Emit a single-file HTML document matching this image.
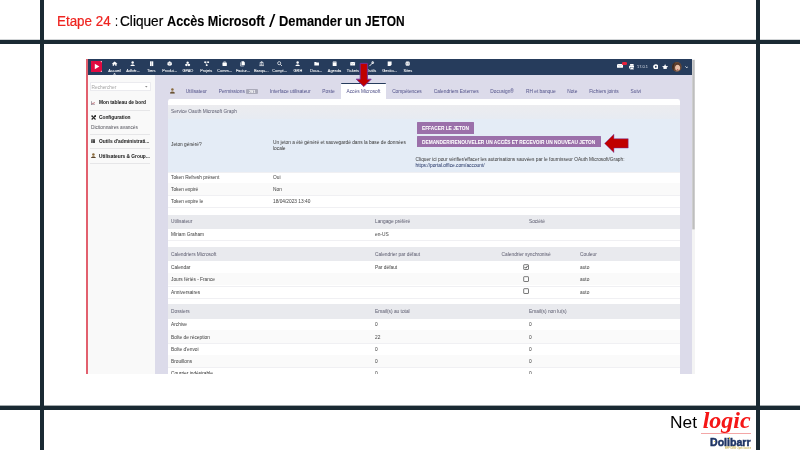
<!DOCTYPE html>
<html lang="fr"><head><meta charset="utf-8"><title>Etape 24</title>
<style>
html,body{margin:0;padding:0;background:#fff;}
body{width:800px;height:450px;overflow:hidden;position:relative;font-family:"Liberation Sans",sans-serif;}
#s{will-change:transform;position:absolute;left:0;top:0;width:800px;height:450px;overflow:hidden;background:#fff;}
#s div,#s span,#s svg{position:absolute;}
#shot{left:0;top:0;width:800px;height:450px;filter:blur(0.45px);}
#shot .t{-webkit-text-stroke:0.03px currentColor;}
.t{white-space:pre;font-family:"Liberation Sans",sans-serif;}
.h{white-space:pre;font-family:"Liberation Sans",sans-serif;transform-origin:0 50%;}
</style></head><body><div id="s">

<div style="left:0px;top:39.8px;width:800px;height:4.2px;background:#1a2a33;"></div>
<div style="left:0px;top:405.7px;width:800px;height:4.3px;background:#1a2a33;"></div>
<div style="left:0px;top:405px;width:800px;height:1px;background:rgba(26,42,51,0.4);"></div>
<div style="left:0px;top:39px;width:800px;height:1px;background:rgba(26,42,51,0.2);"></div>
<div style="left:40px;top:0px;width:4.1px;height:450px;background:#1a2a33;"></div>
<div style="left:755.9px;top:0px;width:4.1px;height:450px;background:#1a2a33;"></div>
<span class="h" style="transform:scaleX(0.9561);left:56.5px;top:10.6px;line-height:20px;font-size:14px;color:#ee2420;font-weight:normal;-webkit-text-stroke:0.22px #ee2420;">Etape 24</span>
<span class="h" style="transform:scaleX(0.7711);left:114.6px;top:10.6px;line-height:20px;font-size:14px;color:#000;font-weight:normal;-webkit-text-stroke:0.22px #000;">:</span>
<span class="h" style="transform:scaleX(0.9739);left:120px;top:10.6px;line-height:20px;font-size:14px;color:#000;font-weight:normal;-webkit-text-stroke:0.22px #000;">Cliquer</span>
<span class="h" style="transform:scaleX(0.9042);left:166.9px;top:10.6px;line-height:20px;font-size:14px;color:#000;font-weight:bold;-webkit-text-stroke:0.12px #000;">Accès Microsoft</span>
<span class="h" style="transform:scaleX(1.3086);left:268.6px;top:11.1px;line-height:20px;font-size:17.6px;color:#000;font-weight:normal;-webkit-text-stroke:0px #000;">/</span>
<span class="h" style="transform:scaleX(0.9201);left:278.6px;top:10.6px;line-height:20px;font-size:14px;color:#000;font-weight:bold;-webkit-text-stroke:0.12px #000;">Demander</span>
<span class="h" style="transform:scaleX(0.9702);left:345.4px;top:10.6px;line-height:20px;font-size:14px;color:#000;font-weight:bold;-webkit-text-stroke:0.12px #000;">un</span>
<span class="h" style="transform:scaleX(0.8528);left:364.6px;top:10.6px;line-height:20px;font-size:14px;color:#000;font-weight:bold;-webkit-text-stroke:0.12px #000;">JETON</span>
<div id="shot">
<div style="left:86px;top:59px;width:606px;height:314.7px;background:#dcdbea;"></div>
<div style="left:692px;top:59px;width:3px;height:314.7px;background:#f4f4f4;"></div>
<svg style="left:690px;top:59px" width="8" height="172" viewBox="690 59 8 172"><rect x="692.3" y="60" width="2.4" height="169.4" fill="#bebebe"/></svg>
<div style="left:88px;top:74.6px;width:66.8px;height:299.1px;background:#f9f9f9;"></div>
<div style="left:85.7px;top:59px;width:2.4px;height:314.7px;background:#e2606e;"></div>
<div style="left:88px;top:59px;width:604px;height:15.6px;background:#263c5c;"></div>
<div style="left:90.9px;top:60.9px;width:11.1px;height:11px;background:#fff;"></div>
<div style="left:90.9px;top:60.9px;width:11.1px;height:11px;background:#e00a40;border-radius:0.3px 2px 2px 0.3px;"></div>
<svg style="left:90.9px;top:60.9px" width="11.1" height="11" viewBox="0 0 11.1 11"><path d="M3.8 2.8 L8.4 5.5 L3.8 8.2 Z" fill="#fff"/></svg>
<svg style="left:111.95px;top:61.05px;overflow:visible" width="5.3" height="5.3" viewBox="0 0 4.6 4.6"><path d="M-0.2 2.4 L2.3 0.4 L4.8 2.4 L4 2.4 L4 4.2 L2.8 4.2 L2.8 3 L1.8 3 L1.8 4.2 L0.6 4.2 L0.6 2.4 Z" fill="#fff"/></svg>
<span class="t" style="left:114.6px;top:66.70px;line-height:8px;font-size:3.9px;color:#fff;font-weight:normal;transform:translateX(-50%);-webkit-text-stroke:0.05px #fff;">Accueil</span>
<svg style="left:130.28px;top:61.05px;overflow:visible" width="5.3" height="5.3" viewBox="0 0 4.6 4.6"><circle cx="2.3" cy="1.3" r="1.05" fill="#fff"/><path d="M0.4 4.4 C0.4 2.6 4.2 2.6 4.2 4.4 Z" fill="#fff"/></svg>
<span class="t" style="left:132.93px;top:66.70px;line-height:8px;font-size:3.9px;color:#fff;font-weight:normal;transform:translateX(-50%);-webkit-text-stroke:0.05px #fff;">Adhér...</span>
<svg style="left:148.61px;top:61.05px;overflow:visible" width="5.3" height="5.3" viewBox="0 0 4.6 4.6"><rect x="0.9" y="0.3" width="2.8" height="4.1" fill="#fff"/><rect x="2.1" y="0.3" width="0.4" height="4.1" fill="#263c5c" opacity="0.6"/></svg>
<span class="t" style="left:151.26px;top:66.70px;line-height:8px;font-size:3.9px;color:#fff;font-weight:normal;transform:translateX(-50%);-webkit-text-stroke:0.05px #fff;">Tiers</span>
<svg style="left:166.94px;top:61.05px;overflow:visible" width="5.3" height="5.3" viewBox="0 0 4.6 4.6"><path d="M2.3 0.3 L4.2 1.2 L4.2 3.4 L2.3 4.4 L0.4 3.4 L0.4 1.2 Z" fill="#fff"/><path d="M2.3 2.2 L2.3 4.4 M0.4 1.2 L2.3 2.2 L4.2 1.2" stroke="#263c5c" stroke-width="0.35" fill="none" opacity="0.7"/></svg>
<span class="t" style="left:169.58999999999997px;top:66.70px;line-height:8px;font-size:3.9px;color:#fff;font-weight:normal;transform:translateX(-50%);-webkit-text-stroke:0.05px #fff;">Produi...</span>
<svg style="left:185.27px;top:61.05px;overflow:visible" width="5.3" height="5.3" viewBox="0 0 4.6 4.6"><path d="M2.3 0.4 L3.3 0.9 L3.3 2 L2.3 2.5 L1.3 2 L1.3 0.9 Z M1.2 2.4 L2.2 2.9 L2.2 4 L1.2 4.5 L0.2 4 L0.2 2.9 Z M3.4 2.4 L4.4 2.9 L4.4 4 L3.4 4.5 L2.4 4 L2.4 2.9 Z" fill="#fff"/></svg>
<span class="t" style="left:187.92px;top:66.70px;line-height:8px;font-size:3.9px;color:#fff;font-weight:normal;transform:translateX(-50%);-webkit-text-stroke:0.05px #fff;">GPAO</span>
<svg style="left:203.60px;top:61.05px;overflow:visible" width="5.3" height="5.3" viewBox="0 0 4.6 4.6"><rect x="0.2" y="0.4" width="1.5" height="1.3" fill="#fff"/><rect x="2.9" y="0.4" width="1.5" height="1.3" fill="#fff"/><rect x="1.6" y="3" width="1.5" height="1.3" fill="#fff"/><path d="M1 1 L3.6 1 M1.2 1.2 L2.3 3.4" stroke="#fff" stroke-width="0.45" fill="none"/></svg>
<span class="t" style="left:206.25px;top:66.70px;line-height:8px;font-size:3.9px;color:#fff;font-weight:normal;transform:translateX(-50%);-webkit-text-stroke:0.05px #fff;">Projets</span>
<svg style="left:221.93px;top:61.05px;overflow:visible" width="5.3" height="5.3" viewBox="0 0 4.6 4.6"><rect x="0.4" y="1.4" width="3.8" height="2.9" rx="0.3" fill="#fff"/><path d="M1.5 1.4 L1.5 0.7 L3.1 0.7 L3.1 1.4" stroke="#fff" stroke-width="0.5" fill="none"/></svg>
<span class="t" style="left:224.57999999999998px;top:66.70px;line-height:8px;font-size:3.9px;color:#fff;font-weight:normal;transform:translateX(-50%);-webkit-text-stroke:0.05px #fff;">Comm...</span>
<svg style="left:240.26px;top:61.05px;overflow:visible" width="5.3" height="5.3" viewBox="0 0 4.6 4.6"><path d="M1.3 0.3 L3.3 0.3 L4.2 1.2 L4.2 3.6 L1.3 3.6 Z" fill="#fff"/><path d="M0.5 1.2 L0.5 4.4 L3.3 4.4" stroke="#fff" stroke-width="0.5" fill="none"/></svg>
<span class="t" style="left:242.91px;top:66.70px;line-height:8px;font-size:3.9px;color:#fff;font-weight:normal;transform:translateX(-50%);-webkit-text-stroke:0.05px #fff;">Factur...</span>
<svg style="left:258.59px;top:61.05px;overflow:visible" width="5.3" height="5.3" viewBox="0 0 4.6 4.6"><path d="M0.3 1.6 L2.3 0.3 L4.3 1.6 Z" fill="#fff"/><rect x="0.3" y="3.8" width="4" height="0.6" fill="#fff"/><path d="M1 1.9 L1 3.6 M2.3 1.9 L2.3 3.6 M3.6 1.9 L3.6 3.6" stroke="#fff" stroke-width="0.6"/></svg>
<span class="t" style="left:261.24px;top:66.70px;line-height:8px;font-size:3.9px;color:#fff;font-weight:normal;transform:translateX(-50%);-webkit-text-stroke:0.05px #fff;">Banqu...</span>
<svg style="left:276.92px;top:61.05px;overflow:visible" width="5.3" height="5.3" viewBox="0 0 4.6 4.6"><circle cx="1.9" cy="1.9" r="1.35" stroke="#fff" stroke-width="0.6" fill="none"/><path d="M2.9 2.9 L4.3 4.3" stroke="#fff" stroke-width="0.7"/></svg>
<span class="t" style="left:279.56999999999994px;top:66.70px;line-height:8px;font-size:3.9px;color:#fff;font-weight:normal;transform:translateX(-50%);-webkit-text-stroke:0.05px #fff;">Compt...</span>
<svg style="left:295.25px;top:61.05px;overflow:visible" width="5.3" height="5.3" viewBox="0 0 4.6 4.6"><circle cx="2.3" cy="1.3" r="1.05" fill="#fff"/><path d="M0.4 4.4 C0.4 2.6 4.2 2.6 4.2 4.4 Z" fill="#fff"/></svg>
<span class="t" style="left:297.9px;top:66.70px;line-height:8px;font-size:3.9px;color:#fff;font-weight:normal;transform:translateX(-50%);-webkit-text-stroke:0.05px #fff;">GRH</span>
<svg style="left:313.58px;top:61.05px;overflow:visible" width="5.3" height="5.3" viewBox="0 0 4.6 4.6"><path d="M0.3 0.9 L1.8 0.9 L2.3 1.4 L4.3 1.4 L4.3 3.9 L0.3 3.9 Z" fill="#fff"/></svg>
<span class="t" style="left:316.23px;top:66.70px;line-height:8px;font-size:3.9px;color:#fff;font-weight:normal;transform:translateX(-50%);-webkit-text-stroke:0.05px #fff;">Docu...</span>
<svg style="left:331.91px;top:61.05px;overflow:visible" width="5.3" height="5.3" viewBox="0 0 4.6 4.6"><rect x="0.6" y="0.5" width="3.4" height="3.9" rx="0.3" fill="#fff"/><rect x="0.6" y="1.3" width="3.4" height="0.35" fill="#263c5c" opacity="0.6"/></svg>
<span class="t" style="left:334.55999999999995px;top:66.70px;line-height:8px;font-size:3.9px;color:#fff;font-weight:normal;transform:translateX(-50%);-webkit-text-stroke:0.05px #fff;">Agenda</span>
<svg style="left:350.24px;top:61.05px;overflow:visible" width="5.3" height="5.3" viewBox="0 0 4.6 4.6"><rect x="0.2" y="0.9" width="4.2" height="3" rx="0.3" fill="#fff"/><path d="M0.2 1.1 L2.3 2.7 L4.4 1.1" stroke="#263c5c" stroke-width="0.3" fill="none" opacity="0.6"/></svg>
<span class="t" style="left:352.89px;top:66.70px;line-height:8px;font-size:3.9px;color:#fff;font-weight:normal;transform:translateX(-50%);-webkit-text-stroke:0.05px #fff;">Tickets</span>
<svg style="left:368.57px;top:61.05px;overflow:visible" width="5.3" height="5.3" viewBox="0 0 4.6 4.6"><path d="M0.6 4.2 L2.8 2" stroke="#fff" stroke-width="0.8" stroke-linecap="round"/><circle cx="3.3" cy="1.4" r="1.1" fill="#fff"/><path d="M3.3 1.4 L4.6 0.1" stroke="#263c5c" stroke-width="0.7"/></svg>
<span class="t" style="left:371.22px;top:66.70px;line-height:8px;font-size:3.9px;color:#fff;font-weight:normal;transform:translateX(-50%);-webkit-text-stroke:0.05px #fff;">Outils</span>
<svg style="left:386.90px;top:61.05px;overflow:visible" width="5.3" height="5.3" viewBox="0 0 4.6 4.6"><path d="M0.6 0.5 L4 0.5 L4 3.2 L2.9 4.3 L0.6 4.3 Z" fill="#fff"/></svg>
<span class="t" style="left:389.54999999999995px;top:66.70px;line-height:8px;font-size:3.9px;color:#fff;font-weight:normal;transform:translateX(-50%);-webkit-text-stroke:0.05px #fff;">Gestio...</span>
<svg style="left:405.23px;top:61.05px;overflow:visible" width="5.3" height="5.3" viewBox="0 0 4.6 4.6"><circle cx="2.3" cy="2.3" r="2" fill="#fff"/><path d="M0.3 2.3 L4.3 2.3 M2.3 0.3 C1.2 1.4 1.2 3.2 2.3 4.3 C3.4 3.2 3.4 1.4 2.3 0.3" stroke="#263c5c" stroke-width="0.3" fill="none" opacity="0.6"/></svg>
<span class="t" style="left:407.88px;top:66.70px;line-height:8px;font-size:3.9px;color:#fff;font-weight:normal;transform:translateX(-50%);-webkit-text-stroke:0.05px #fff;">Sites</span>
<svg style="left:113.0px;top:73.2px" width="3.2" height="1.6" viewBox="0 0 3.2 1.6"><path d="M0 1.6 L1.6 0 L3.2 1.6 Z" fill="#fff"/></svg>
<svg style="left:617.4px;top:64.2px" width="6" height="3.8" viewBox="0 0 6 3.8"><rect x="0" y="0" width="6" height="3.8" rx="0.5" fill="#fff"/><path d="M0.3 0.5 L3 2.2 L5.7 0.5" stroke="#263c5c" stroke-width="0.4" fill="none" opacity="0.55"/></svg>
<div style="left:622.3px;top:62.4px;width:4.4px;height:2.7px;background:#e8203a;border-radius:1.35px;"></div>
<svg style="left:628.6px;top:63.8px" width="5.7" height="5.8" viewBox="0 0 5.7 5.8"><rect x="1.1" y="0" width="3.5" height="1.8" fill="#fff"/><rect x="0" y="1.7" width="5.7" height="2.9" rx="0.5" fill="#fff"/><rect x="1.1" y="3.5" width="3.5" height="2.2" fill="#fff" stroke="#263c5c" stroke-width="0.4"/></svg>
<span class="t" style="left:642.4px;top:62.70px;line-height:8px;font-size:3.9px;color:#c9d0dc;font-weight:normal;transform:translateX(-50%);">17.0.1</span>
<svg style="left:652.5px;top:63.7px" width="5.6" height="5.6" viewBox="0 0 5.4 5.4"><circle cx="2.7" cy="2.7" r="2.5" fill="#fff"/><circle cx="2.7" cy="2.7" r="0.9" fill="#263c5c"/></svg>
<svg style="left:662.1px;top:63.6px" width="6.2" height="5.9" viewBox="0 0 5.4 5.2"><path d="M2.7 0 L3.5 1.8 L5.4 2 L4 3.3 L4.4 5.2 L2.7 4.2 L1 5.2 L1.4 3.3 L0 2 L1.9 1.8 Z" fill="#fff"/></svg>
<svg style="left:672.3px;top:61.9px" width="9.8" height="9.8" viewBox="0 0 8.2 8.2"><defs><clipPath id="av"><circle cx="4.1" cy="4.1" r="4.1"/></clipPath></defs><g clip-path="url(#av)"><rect width="8.2" height="8.2" fill="#6b4a36"/><path d="M0 0 L3 0 C1.6 1.6 1.2 5 1.6 8.2 L0 8.2 Z" fill="#3d2a20"/><ellipse cx="4.7" cy="4.5" rx="2.1" ry="2.7" fill="#e6bda6"/><path d="M2.2 4.6 C1.8 1.6 3.4 0.5 4.8 0.7 C6.8 0.7 7.7 2.6 7.1 5 C6.8 3.3 6 2.4 4.7 2.3 C3.4 2.4 2.7 3.3 2.2 4.6 Z" fill="#5a3c2c"/><ellipse cx="4.7" cy="6.2" rx="0.8" ry="0.4" fill="#b8474a"/><rect x="2" y="7.5" width="6.2" height="0.8" fill="#8a6a5a"/></g></svg>
<svg style="left:684.6px;top:65.7px" width="3.6" height="2.4" viewBox="0 0 3.4 2.2"><path d="M0.3 0.3 L1.7 1.7 L3.1 0.3" stroke="#fff" stroke-width="0.75" fill="none"/></svg>
<div style="left:89.5px;top:82.3px;width:61px;height:9.1px;background:#fff;border:0.4px solid #ebebef;box-sizing:border-box;border-radius:0.6px;"></div>
<span class="t" style="left:91.5px;top:83.70px;line-height:8px;font-size:4.8px;color:#aaa;font-weight:normal;">Rechercher</span>
<svg style="left:145.4px;top:86px" width="2.6" height="1.6" viewBox="0 0 2.6 1.6"><path d="M0 0 L2.6 0 L1.3 1.5 Z" fill="#8a8a8a"/></svg>
<svg style="left:90.6px;top:100.6px" width="4.6" height="4.2" viewBox="0 0 4.6 4.2"><path d="M0.3 0.2 L0.3 3.9 L4.4 3.9" stroke="#6a5a6a" stroke-width="0.7" fill="none"/><path d="M1 3 L2 1.8 L2.9 2.6 L4.2 1" stroke="#b0505a" stroke-width="0.7" fill="none"/></svg>
<span class="t" style="left:99px;top:99.30px;line-height:8px;font-size:4.82px;color:#222;font-weight:bold;">Mon tableau de bord</span>
<div style="left:90px;top:110.3px;width:60.2px;height:0.45px;background:#e6e6e8;"></div>
<svg style="left:90.8px;top:115px" width="5.2" height="5.2" viewBox="0 0 4.6 4.6"><path d="M0.6 4 L4 0.6 M0.8 0.8 L4 4" stroke="#222" stroke-width="1"/><circle cx="3.8" cy="0.9" r="0.8" fill="#222"/><circle cx="0.9" cy="0.9" r="0.6" fill="#222"/></svg>
<span class="t" style="left:99px;top:114.40px;line-height:8px;font-size:4.82px;color:#222;font-weight:bold;">Configuration</span>
<span class="t" style="left:91px;top:123.70px;line-height:8px;font-size:4.8px;color:#606068;font-weight:normal;">Dictionnaires avancés</span>
<div style="left:90px;top:133.5px;width:60.2px;height:0.45px;background:#e6e6e8;"></div>
<svg style="left:90.8px;top:138.5px" width="4.6" height="4.8" viewBox="0 0 4.6 4.4"><rect x="0.2" y="0.2" width="4.2" height="4" fill="#222"/><path d="M1.6 0.2 L1.6 4.2 M0.2 1.5 L4.4 1.5 M0.2 2.9 L4.4 2.9" stroke="#fff" stroke-width="0.3"/></svg>
<span class="t" style="left:99px;top:138.30px;line-height:8px;font-size:4.82px;color:#222;font-weight:bold;">Outils d'administrati...</span>
<div style="left:90px;top:148.2px;width:60.2px;height:0.45px;background:#e6e6e8;"></div>
<svg style="left:90.8px;top:153.2px" width="4.8" height="5.2" viewBox="0 0 4.4 4.6"><circle cx="2.2" cy="1.3" r="1.15" fill="#8a6a3a"/><path d="M0.3 4.5 C0.3 2.5 4.1 2.5 4.1 4.5 Z" fill="#8a6a3a"/><rect x="0.2" y="3.8" width="4" height="0.8" fill="#4a3a2a"/></svg>
<span class="t" style="left:99px;top:152.90px;line-height:8px;font-size:4.82px;color:#222;font-weight:bold;">Utilisateurs &amp; Group...</span>
<div style="left:90px;top:163.1px;width:60.2px;height:0.45px;background:#e6e6e8;"></div>
<svg style="left:170px;top:88.2px" width="4.8" height="5.6" viewBox="0 0 4.4 4.8"><circle cx="2.2" cy="1.3" r="1.15" fill="#8a6a3a"/><path d="M0.2 4.7 C0.2 2.6 4.2 2.6 4.2 4.7 Z" fill="#8a6a3a"/><rect x="0.1" y="4" width="4.2" height="0.8" fill="#4a3a2a"/></svg>
<div style="left:341px;top:83.2px;width:45.2px;height:16.2px;background:#fff;border-top:0.7px solid #263c5c;box-sizing:border-box;border-radius:0.8px 0.8px 0 0;"></div>
<span class="t" style="left:196.3px;top:88.00px;line-height:8px;font-size:4.8px;color:#58588e;font-weight:normal;transform:translateX(-50%);">Utilisateur</span>
<span class="t" style="left:231.75px;top:88.00px;line-height:8px;font-size:4.8px;color:#58588e;font-weight:normal;transform:translateX(-50%);">Permissions</span>
<span class="t" style="left:290.3px;top:88.00px;line-height:8px;font-size:4.8px;color:#58588e;font-weight:normal;transform:translateX(-50%);">Interface utilisateur</span>
<span class="t" style="left:328.5px;top:88.00px;line-height:8px;font-size:4.8px;color:#58588e;font-weight:normal;transform:translateX(-50%);">Poste</span>
<span class="t" style="left:363.45px;top:88.00px;line-height:8px;font-size:4.8px;color:#58588e;font-weight:normal;transform:translateX(-50%);">Accès Microsoft</span>
<span class="t" style="left:406.95px;top:88.00px;line-height:8px;font-size:4.8px;color:#58588e;font-weight:normal;transform:translateX(-50%);">Compétences</span>
<span class="t" style="left:456.25px;top:88.00px;line-height:8px;font-size:4.8px;color:#58588e;font-weight:normal;transform:translateX(-50%);">Calendriers Externes</span>
<span class="t" style="left:502.15px;top:88.00px;line-height:8px;font-size:4.8px;color:#58588e;font-weight:normal;transform:translateX(-50%);">Docusign®</span>
<span class="t" style="left:540.8px;top:88.00px;line-height:8px;font-size:4.8px;color:#58588e;font-weight:normal;transform:translateX(-50%);">RH et banque</span>
<span class="t" style="left:572.25px;top:88.00px;line-height:8px;font-size:4.8px;color:#58588e;font-weight:normal;transform:translateX(-50%);">Note</span>
<span class="t" style="left:604.0px;top:88.00px;line-height:8px;font-size:4.8px;color:#58588e;font-weight:normal;transform:translateX(-50%);">Fichiers joints</span>
<span class="t" style="left:635.8px;top:88.00px;line-height:8px;font-size:4.8px;color:#58588e;font-weight:normal;transform:translateX(-50%);">Suivi</span>
<div style="left:246.2px;top:88.9px;width:11.7px;height:5px;background:#ababba;border-radius:1px;"></div>
<span class="t" style="left:252.1px;top:87.50px;line-height:8px;font-size:3.8px;color:#fff;font-weight:normal;transform:translateX(-50%);-webkit-text-stroke:0.15px #fff;">291</span>
<div style="left:168px;top:99.3px;width:511.5px;height:274.4px;background:#fff;border-radius:2.4px 2.4px 0 0;"></div>
<div style="left:168px;top:104.7px;width:511.5px;height:13.9px;background:linear-gradient(#ececef,#e7ebf2);"></div>
<span class="t" style="left:171px;top:107.50px;line-height:8px;font-size:4.8px;color:#646476;font-weight:normal;">Service Oauth Microsoft Graph</span>
<div style="left:168px;top:118.6px;width:511.5px;height:53px;background:#e4ecf6;"></div>
<span class="t" style="left:171px;top:141.00px;line-height:8px;font-size:4.8px;color:#444;font-weight:normal;">Jeton généré?</span>
<span class="t" style="left:273px;top:138.50px;line-height:8px;font-size:4.8px;color:#444;font-weight:normal;">Un jeton a été généré et sauvegardé dans la base de données</span>
<span class="t" style="left:273px;top:145.10px;line-height:8px;font-size:4.8px;color:#444;font-weight:normal;">locale</span>
<div style="left:417px;top:122.4px;width:57px;height:11.4px;background:#9b70aa;border-radius:0.5px;"></div>
<span class="t" style="left:445.5px;top:125.10px;line-height:8px;font-size:4.8px;color:#fff;font-weight:bold;transform:translateX(-50%);">EFFACER LE JETON</span>
<div style="left:417px;top:136.1px;width:183.6px;height:11.4px;background:#9b70aa;border-radius:0.5px;"></div>
<span class="t" style="left:508.6px;top:138.70px;line-height:8px;font-size:4.8px;color:#fff;font-weight:bold;transform:translateX(-50%);">DEMANDER/RENOUVELER UN ACCÈS ET RECEVOIR UN NOUVEAU JETON</span>
<span class="t" style="left:415.6px;top:155.50px;line-height:8px;font-size:4.8px;color:#444;font-weight:normal;">Cliquer ici pour vérifier/effacer les autorisations sauvées par le fournisseur OAuth Microsoft/Graph:</span>
<span class="t" style="left:415.6px;top:162.40px;line-height:8px;font-size:4.8px;color:#2a3a6a;font-weight:normal;">https://portal.office.com/account/</span>
<div style="left:168px;top:171.5px;width:511.5px;height:0.5px;background:#f0f0f3;"></div>
<span class="t" style="left:171px;top:174.20px;line-height:8px;font-size:4.8px;color:#4a4a4a;font-weight:normal;">Token Refresh présent</span>
<span class="t" style="left:273px;top:174.20px;line-height:8px;font-size:4.8px;color:#4a4a4a;font-weight:normal;">Oui</span>
<div style="left:168px;top:183.4px;width:511.5px;height:0.5px;background:#f0f0f3;"></div>
<div style="left:168px;top:182.9px;width:511.5px;height:12.4px;background:#fafafa;"></div>
<span class="t" style="left:171px;top:186.30px;line-height:8px;font-size:4.8px;color:#4a4a4a;font-weight:normal;">Token expiré</span>
<span class="t" style="left:273px;top:186.30px;line-height:8px;font-size:4.8px;color:#4a4a4a;font-weight:normal;">Non</span>
<div style="left:168px;top:195.4px;width:511.5px;height:0.5px;background:#f0f0f3;"></div>
<span class="t" style="left:171px;top:198.30px;line-height:8px;font-size:4.8px;color:#4a4a4a;font-weight:normal;">Token expire le</span>
<span class="t" style="left:273px;top:198.30px;line-height:8px;font-size:4.8px;color:#4a4a4a;font-weight:normal;">18/04/2023 13:40</span>
<div style="left:168px;top:207.4px;width:511.5px;height:0.5px;background:#f0f0f3;"></div>
<div style="left:168px;top:214.6px;width:511.5px;height:14.0px;background:#e9eaee;"></div>
<span class="t" style="left:171px;top:218.00px;line-height:8px;font-size:4.8px;color:#646476;font-weight:normal;">Utilisateur</span>
<span class="t" style="left:375px;top:218.00px;line-height:8px;font-size:4.8px;color:#646476;font-weight:normal;">Langage préféré</span>
<span class="t" style="left:529px;top:218.00px;line-height:8px;font-size:4.8px;color:#646476;font-weight:normal;">Société</span>
<span class="t" style="left:171px;top:231.20px;line-height:8px;font-size:4.8px;color:#4a4a4a;font-weight:normal;">Miriam Graham</span>
<span class="t" style="left:375px;top:231.20px;line-height:8px;font-size:4.8px;color:#4a4a4a;font-weight:normal;">en-US</span>
<div style="left:168px;top:240.3px;width:511.5px;height:0.5px;background:#f0f0f3;"></div>
<div style="left:168px;top:247.3px;width:511.5px;height:13.899999999999977px;background:#e9eaee;"></div>
<span class="t" style="left:171px;top:250.65px;line-height:8px;font-size:4.8px;color:#646476;font-weight:normal;">Calendriers Microsoft</span>
<span class="t" style="left:375px;top:250.65px;line-height:8px;font-size:4.8px;color:#646476;font-weight:normal;">Calendrier par défaut</span>
<span class="t" style="left:501.6px;top:250.65px;line-height:8px;font-size:4.8px;color:#646476;font-weight:normal;">Calendrier synchronisé</span>
<span class="t" style="left:580px;top:250.65px;line-height:8px;font-size:4.8px;color:#646476;font-weight:normal;">Couleur</span>
<span class="t" style="left:171px;top:264.20px;line-height:8px;font-size:4.8px;color:#4a4a4a;font-weight:normal;">Calendar</span>
<span class="t" style="left:375px;top:264.20px;line-height:8px;font-size:4.8px;color:#4a4a4a;font-weight:normal;">Par défaut</span>
<span class="t" style="left:580px;top:264.20px;line-height:8px;font-size:4.8px;color:#4a4a4a;font-weight:normal;">auto</span>
<div style="left:168px;top:273.3px;width:511.5px;height:0.5px;background:#f0f0f3;"></div>
<div style="left:168px;top:273.0px;width:511.5px;height:12.4px;background:#fafafa;"></div>
<span class="t" style="left:171px;top:276.40px;line-height:8px;font-size:4.8px;color:#4a4a4a;font-weight:normal;">Jours fériés - France</span>
<span class="t" style="left:580px;top:276.40px;line-height:8px;font-size:4.8px;color:#4a4a4a;font-weight:normal;">auto</span>
<div style="left:168px;top:285.5px;width:511.5px;height:0.5px;background:#f0f0f3;"></div>
<span class="t" style="left:171px;top:288.70px;line-height:8px;font-size:4.8px;color:#4a4a4a;font-weight:normal;">Anniversaires</span>
<span class="t" style="left:580px;top:288.70px;line-height:8px;font-size:4.8px;color:#4a4a4a;font-weight:normal;">auto</span>
<div style="left:168px;top:297.7px;width:511.5px;height:0.5px;background:#f0f0f3;"></div>
<svg style="left:523.0px;top:264.0px" width="6.2" height="6.2" viewBox="0 0 6.2 6.2"><rect x="0.7" y="0.7" width="4.8" height="4.8" rx="0.5" fill="#fff" stroke="#555" stroke-width="0.8"/><path d="M1.7 3.1 L2.8 4.2 L4.7 1.8" stroke="#333" stroke-width="0.85" fill="none"/></svg>
<svg style="left:523.0px;top:276.0px" width="6.2" height="6.2" viewBox="0 0 6.2 6.2"><rect x="0.7" y="0.7" width="4.8" height="4.8" rx="0.5" fill="#fff" stroke="#555" stroke-width="0.8"/></svg>
<svg style="left:523.0px;top:288.4px" width="6.2" height="6.2" viewBox="0 0 6.2 6.2"><rect x="0.7" y="0.7" width="4.8" height="4.8" rx="0.5" fill="#fff" stroke="#555" stroke-width="0.8"/></svg>
<div style="left:168px;top:304.2px;width:511.5px;height:15.0px;background:#e9eaee;"></div>
<span class="t" style="left:171px;top:308.10px;line-height:8px;font-size:4.8px;color:#646476;font-weight:normal;">Dossiers</span>
<span class="t" style="left:375px;top:308.10px;line-height:8px;font-size:4.8px;color:#646476;font-weight:normal;">Email(s) au total</span>
<span class="t" style="left:529px;top:308.10px;line-height:8px;font-size:4.8px;color:#646476;font-weight:normal;">Email(s) non lu(s)</span>
<span class="t" style="left:171px;top:321.40px;line-height:8px;font-size:4.8px;color:#4a4a4a;font-weight:normal;">Archive</span>
<span class="t" style="left:375px;top:321.40px;line-height:8px;font-size:4.8px;color:#4a4a4a;font-weight:normal;">0</span>
<span class="t" style="left:529px;top:321.40px;line-height:8px;font-size:4.8px;color:#4a4a4a;font-weight:normal;">0</span>
<div style="left:168px;top:330.6px;width:511.5px;height:0.5px;background:#f0f0f3;"></div>
<div style="left:168px;top:330.2px;width:511.5px;height:12.4px;background:#fafafa;"></div>
<span class="t" style="left:171px;top:333.60px;line-height:8px;font-size:4.8px;color:#4a4a4a;font-weight:normal;">Boîte de réception</span>
<span class="t" style="left:375px;top:333.60px;line-height:8px;font-size:4.8px;color:#4a4a4a;font-weight:normal;">22</span>
<span class="t" style="left:529px;top:333.60px;line-height:8px;font-size:4.8px;color:#4a4a4a;font-weight:normal;">0</span>
<div style="left:168px;top:342.8px;width:511.5px;height:0.5px;background:#f0f0f3;"></div>
<span class="t" style="left:171px;top:345.70px;line-height:8px;font-size:4.8px;color:#4a4a4a;font-weight:normal;">Boîte d'envoi</span>
<span class="t" style="left:375px;top:345.70px;line-height:8px;font-size:4.8px;color:#4a4a4a;font-weight:normal;">0</span>
<span class="t" style="left:529px;top:345.70px;line-height:8px;font-size:4.8px;color:#4a4a4a;font-weight:normal;">0</span>
<div style="left:168px;top:355px;width:511.5px;height:0.5px;background:#f0f0f3;"></div>
<div style="left:168px;top:354.5px;width:511.5px;height:12.4px;background:#fafafa;"></div>
<span class="t" style="left:171px;top:357.90px;line-height:8px;font-size:4.8px;color:#4a4a4a;font-weight:normal;">Brouillons</span>
<span class="t" style="left:375px;top:357.90px;line-height:8px;font-size:4.8px;color:#4a4a4a;font-weight:normal;">0</span>
<span class="t" style="left:529px;top:357.90px;line-height:8px;font-size:4.8px;color:#4a4a4a;font-weight:normal;">0</span>
<div style="left:168px;top:367.1px;width:511.5px;height:0.5px;background:#f0f0f3;"></div>
<div style="left:168px;top:367.6px;width:511.5px;height:6.099999999999966px;overflow:hidden;">
<span class="t" style="left:3px;top:2.2px;line-height:8px;font-size:4.8px;color:#3a3a3a;">Courrier indésirable</span>
<span class="t" style="left:207px;top:2.2px;line-height:8px;font-size:4.8px;color:#3a3a3a;">0</span>
<span class="t" style="left:361px;top:2.2px;line-height:8px;font-size:4.8px;color:#3a3a3a;">0</span>
</div>
</div>
<svg style="left:354px;top:61px" width="20" height="28" viewBox="354 61 20 28"><path d="M360.2 63.4 L367.4 63.4 L367.4 79.2 L371.2 79.2 L363.8 86.6 L356.3 79.2 L360.2 79.2 Z" fill="#c00000" stroke="#7030a0" stroke-width="0.9" stroke-linejoin="miter"/></svg>
<svg style="left:602px;top:131px" width="30" height="24" viewBox="602 131 30 24"><path d="M604.6 143.4 L613.9 134.2 L613.9 138.7 L628.2 138.7 L628.2 148 L613.9 148 L613.9 152.6 Z" fill="#c00000" stroke="#7030a0" stroke-width="0.45"/></svg>
<span class="h" style="transform:scaleX(1.0335);left:670.4px;top:411px;line-height:24px;font-size:16.8px;color:#000;">Net</span>
<span class="h" style="transform:scaleX(1.0000);left:702.7px;top:408.4px;line-height:24px;font-size:24px;color:#f51616;font-family:'Liberation Serif',serif;font-style:italic;font-weight:bold;">logic</span>
<div style="left:701px;top:432.8px;width:49.5px;height:0.6px;background:#f3a6a6;"></div>
<span class="h" style="transform:scaleX(0.9133);left:710.2px;top:435.3px;line-height:14px;font-size:11.6px;color:#1f3565;font-weight:bold;-webkit-text-stroke:0.5px #1f3565;">Dolibarr</span>
<div style="left:713.6px;top:441px;width:1.3px;height:1.3px;background:#e8c62a;border-radius:50%;"></div>
<div style="left:728.5px;top:437.4px;width:1.3px;height:1.3px;background:#e8c62a;border-radius:50%;"></div>
<span class="h" style="transform:scaleX(0.8035);left:724.6px;top:445.8px;line-height:5px;font-size:3px;color:#b89a20;">ERP/CRM Open Source</span>
</div></body></html>
